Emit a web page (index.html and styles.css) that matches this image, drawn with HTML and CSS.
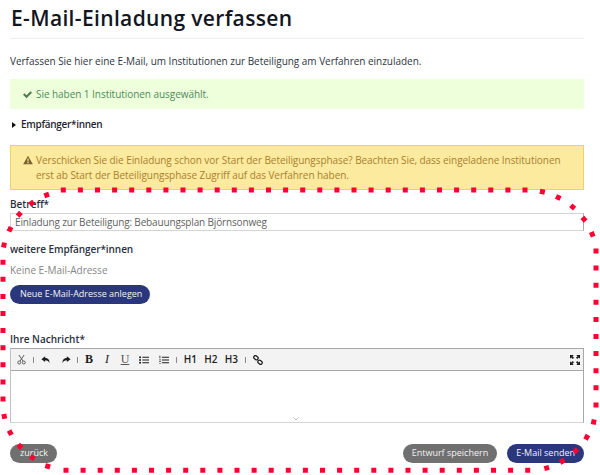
FILE: index.html
```html
<!DOCTYPE html>
<html lang="de">
<head>
<meta charset="UTF-8">
<meta name="viewport" content="width=device-width, initial-scale=1.0">
<title>E-Mail-Einladung verfassen</title>
<link rel="stylesheet" href="styles.css">
</head>
<body>
<div class="page">
    <h1 class="title">E-Mail-Einladung verfassen</h1>
    <p class="intro">Verfassen Sie hier eine E-Mail, um Institutionen zur Beteiligung am Verfahren einzuladen.</p>

    <div class="alert alert-ok">
        <svg class="alert-icon" viewBox="0 0 12 12"><path d="M0 6.400 2 4.400 4.700 7.100 10 1.800 12 3.800 4.700 11z"/></svg>
        <span>Sie haben 1 Institutionen ausgewählt.</span>
    </div>

    <div class="toggle">
        <svg class="caret" viewBox="0 0 4 6"><path d="M0 0 4 3 0 6z"/></svg>
        <span>Empfänger*innen</span>
    </div>

    <div class="alert alert-warn">
        <svg class="warn-icon" viewBox="0 0 12 12"><path fill-rule="evenodd" d="M6 .8 11.800 11H.2zM5.200 4.200l.2 3.600h1.200l.2-3.600zM5.200 8.500v1.400h1.600V8.500z"/></svg>
        <span>Verschicken Sie die Einladung schon vor Start der Beteiligungsphase? Beachten Sie, dass eingeladene Institutionen erst ab Start der Beteiligungsphase Zugriff auf das Verfahren haben.</span>
    </div>

    <label class="label">Betreff*</label>
    <div class="input">Einladung zur Beteiligung: Bebauungsplan Björnsonweg</div>

    <div class="label label-more">weitere Empfänger*innen</div>
    <div class="muted">Keine E-Mail-Adresse</div>
    <a class="btn btn-blue btn-new">Neue E-Mail-Adresse anlegen</a>

    <label class="label label-msg">Ihre Nachricht*</label>
    <div class="editor">
        <div class="toolbar">
            <span class="tool"><svg class="scissors" viewBox="0 0 12 14"><path d="M2.500 1 8 9M9.500 1 4 9"/><circle cx="3" cy="11" r="2"/><circle cx="9" cy="11" r="2"/></svg></span>
            <span class="sep"></span>
            <span class="tool"><svg viewBox="0 0 12 12"><path d="M5 1.500 0.500 5 5 8.500V6.200c2.600 0 4.400.8 5 3.800.8-4-1.500-6.500-5-6.500z"/></svg></span>
            <span class="tool"><svg viewBox="0 0 12 12"><path d="M7 1.500 11.500 5 7 8.500V6.200c-2.600 0-4.400.8-5 3.800-.8-4 1.500-6.500 5-6.500z"/></svg></span>
            <span class="sep"></span>
            <span class="tool tool-serif"><b>B</b></span>
            <span class="tool tool-serif"><i>I</i></span>
            <span class="tool tool-serif tool-u">U</span>
            <span class="tool"><svg viewBox="0 0 12 12"><path d="M4 2h8v1.400H4zM4 5.300h8v1.400H4zM4 8.600h8V10H4z"/><circle cx="1.300" cy="2.700" r="1.200"/><circle cx="1.300" cy="6" r="1.200"/><circle cx="1.300" cy="9.300" r="1.200"/></svg></span>
            <span class="tool"><svg viewBox="0 0 12 12"><path d="M3.500 2h8.500v1.400H3.500zM3.500 5.300h8.500v1.400H3.500zM3.500 8.600h8.500V10H3.500zM.6 1h1v3H.6zM.2 5.400h2v.8h-2zM.2 9.800h2v.8h-2zM.2 7.600h2v.8h-2z"/></svg></span>
            <span class="sep sep-before-h"></span>
            <span class="tool tool-h">H1</span>
            <span class="tool tool-h">H2</span>
            <span class="tool tool-h">H3</span>
            <span class="sep sep-after-h"></span>
            <span class="tool"><svg class="link" viewBox="0 0 12 12"><rect x=".8" y="1.200" width="5.500" height="4" rx="1.800" transform="rotate(40 3.500 3.200)"/><rect x="5.700" y="6.800" width="5.500" height="4" rx="1.800" transform="rotate(40 8.500 8.800)"/></svg></span>
            <span class="tool tool-end"><svg viewBox="0 0 12 12"><path d="M0 0h4.500L3 1.500 4.800 3.300 3.300 4.800 1.500 3 0 4.500zM12 0v4.500L10.500 3 8.700 4.800 7.200 3.300 9 1.500 7.500 0zM0 12V7.500L1.500 9l1.800-1.800 1.500 1.500L3 10.500 4.500 12zM12 12H7.500L9 10.500 7.200 8.700 8.700 7.200 10.500 9 12 7.500z"/></svg></span>
        </div>
        <div class="editor-body">
            <svg class="grip" viewBox="0 0 6 4"><path d="M.5.500 3 3 5.500.500"/></svg>
        </div>
    </div>

    <div class="actions">
        <a class="btn btn-grey btn-back">zurück</a>
        <div class="actions-right">
            <a class="btn btn-grey">Entwurf speichern</a>
            <a class="btn btn-blue">E-Mail senden</a>
        </div>
    </div>
</div>

<!-- red dotted marker drawn over the form: four straight runs, then the dots of each corner -->
<svg class="marker" viewBox="0 0 600 475">
    <path class="marker-run" d="M60.800 190H528M596 248.500V408M530.200 470.200H61M3 401.500V259"/>
    <path d="M539.900 191.200l4.900 1M556 196.400l4.500 2.100M570.800 205.400l3.800 3.200M582.400 217.400l3.200 3.800M591.300 232l1.900 4.600"/>
    <path d="M594.200 419.500l-1 4.900M588 435.100l-2.500 4.300M577.600 449.100l-3.800 3.200M564.400 460l-4.300 2.500M549.100 467.300l-4.800 1.300"/>
    <path d="M50.100 467l-4.800-1.400M34.400 459l-4.200-2.700M21.700 448.200l-3.400-3.700M11.500 434.900l-2.400-4.400M4.800 418.800l-1-4.900"/>
    <path d="M3.500 247.500l.9-4.900M8.900 231.500l2.200-4.500M17.700 216.200l3.200-3.800M29.700 204.800l4-3M44.300 195.900l4.700-1.700"/>
</svg>
</body>
</html>
```

FILE: styles.css
```css
body {
    margin: 0;
    background: #fff;
    color: #2b2b2b;
    font-family: "Open Sans", sans-serif;
    font-size: 10px;
    line-height: 15px;
}
.page {
    position: relative;
    height: 475px;
    width: 574px;
    margin-left: 10px;
    overflow: hidden;
}
.title {
    margin: 0;
    height: 34px;
    padding: 4px 0 0 1px;
    border-bottom: 1px solid #eeeeee;
    font-size: 21px;
    line-height: 28px;
    font-weight: 600;
    letter-spacing: 0.35px;
    color: #12161f;
}
.intro {
    margin: 15px 0 0;
    color: #2f3540;
    letter-spacing: -0.03px;
}
.alert {
    box-sizing: border-box;
    display: flex;
    margin-top: 10px;
}
.alert-ok {
    height: 30px;
    align-items: center;
    padding-left: 13px;
    background: #eeffdc;
    color: #4f8a5b;
    letter-spacing: -0.05px;
}
.alert-icon {
    width: 9px;
    height: 9px;
    margin-right: 4px;
    fill: #4f7d50;
}
.toggle {
    display: flex;
    align-items: center;
    margin-top: 8px;
    font-weight: 600;
    letter-spacing: -0.3px;
    color: #1f2530;
}
.caret {
    width: 4px;
    height: 6px;
    margin: 0 5px 0 2px;
    fill: #111;
}
.alert-warn {
    height: 45px;
    margin-top: 13px;
    padding: 7px 15px 0 12px;
    background: #fcea9f;
    border: 1px solid #efd366;
    color: #a97f2c;
    line-height: 14.500px;
    letter-spacing: -0.06px;
}
.warn-icon {
    flex: none;
    width: 10px;
    height: 10px;
    margin: 2px 3px 0 0;
    fill: #7a6230;
}
.label {
    display: block;
    margin-top: 7px;
    font-weight: 600;
    color: #2a3040;
}
.input {
    box-sizing: border-box;
    height: 18px;
    margin-top: 1px;
    padding-left: 4px;
    border: 1px solid #d5d5d5;
    border-right-color: #a8a8a8;
    color: #5f5f5f;
    line-height: 16px;
    letter-spacing: -0.15px;
}
.label-more {
    margin-top: 11px;
    letter-spacing: -0.08px;
}
.muted {
    margin-top: 6px;
    color: #868686;
}
.btn {
    display: inline-block;
    box-sizing: border-box;
    height: 19px;
    padding: 0 9px;
    border-radius: 10px;
    color: #f2f2f2;
    font-size: 9px;
    line-height: 18px;
    white-space: nowrap;
}
.btn-blue {
    background: #2a377c;
}
.btn-grey {
    background: #707070;
}
.btn-new {
    display: block;
    width: 140px;
    margin-top: 7px;
    padding-left: 10px;
}
.btn-back {
    width: 47px;
    padding-left: 10px;
}
.label-msg {
    margin-top: 28px;
}
.editor {
    box-sizing: border-box;
    height: 75px;
    margin-top: 1px;
    border: 1px solid #a8a8a8;
    border-bottom-color: #d5d5d5;
    border-left-color: #c0c0c0;
}
.toolbar {
    display: flex;
    align-items: center;
    box-sizing: border-box;
    height: 22px;
    background: #f3f3f3;
    border-bottom: 1px solid #a8a8a8;
    color: #1c1c1c;
}
.tool {
    display: flex;
    justify-content: center;
    width: 20px;
}
.tool svg {
    width: 10px;
    height: 10px;
    fill: #1c1c1c;
}
.tool .scissors {
    width: 9px;
    height: 11px;
    fill: none;
    stroke: #555;
    stroke-width: 1.300;
}
.tool .link {
    width: 10px;
    height: 10px;
    fill: none;
    stroke: #1c1c1c;
    stroke-width: 1.500;
}
.tool-serif {
    width: 18px;
    font-family: "Liberation Serif", serif;
    font-size: 12px;
}
.tool-u {
    text-decoration: underline;
    color: #555;
}
.tool-h {
    width: 20.500px;
    font-weight: 600;
    font-size: 10px;
}
.tool-end {
    margin-left: auto;
    width: 17px;
}
.sep {
    width: 1px;
    height: 6px;
    margin: 0 2px 0 1.500px;
    background: #8a8a8a;
}
.sep-before-h {
    margin-right: 3.500px;
}
.sep-after-h {
    margin: 0 2px 0 3px;
}
.editor-body {
    position: relative;
    height: 51px;
    background: #fff;
}
.grip {
    position: absolute;
    left: 282px;
    bottom: 1px;
    width: 6px;
    height: 4px;
    fill: none;
    stroke: #bbb;
}
.actions {
    display: flex;
    justify-content: space-between;
    margin-top: 21px;
}
.actions-right {
    display: flex;
    gap: 10px;
}
.marker {
    position: absolute;
    left: 0;
    top: 0;
    width: 600px;
    height: 475px;
    fill: none;
    stroke: #ff0033;
    stroke-width: 5;
}
.marker-run {
    stroke-dasharray: 5 12.100;
}
```
